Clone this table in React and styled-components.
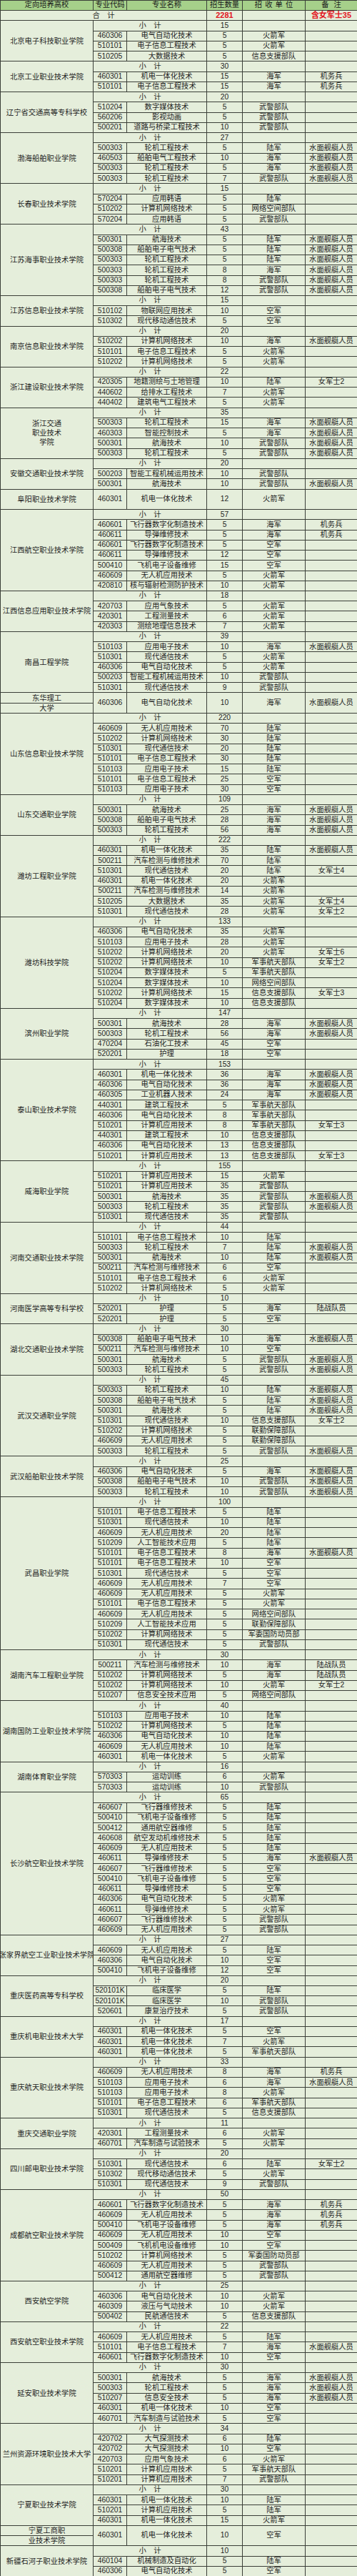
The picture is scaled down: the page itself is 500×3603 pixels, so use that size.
import React from 'react';
import styled, { createGlobalStyle } from 'styled-components';

const W = '水面舰艇人员';
const J = '机务兵';
const L = '陆战队员';

const groups = [
  { school: '北京电子科技职业学院', total: 15, rows: [
    ['460306', '电气自动化技术', 5, '火箭军', ''],
    ['510101', '电子信息工程技术', 5, '火箭军', ''],
    ['510205', '大数据技术', 5, '信息支援部队', ''],
  ]},
  { school: '北京工业职业技术学院', total: 30, rows: [
    ['460301', '机电一体化技术', 15, '海军', J],
    ['510101', '电子信息工程技术', 15, '海军', J],
  ]},
  { school: '辽宁省交通高等专科学校', total: 20, rows: [
    ['510204', '数字媒体技术', 5, '武警部队', ''],
    ['560206', '影视动画', 5, '武警部队', ''],
    ['500201', '道路与桥梁工程技术', 10, '武警部队', ''],
  ]},
  { school: '渤海船舶职业学院', total: 27, rows: [
    ['500303', '轮机工程技术', 5, '陆军', W],
    ['460503', '船舶电气工程技术', 10, '海军', W],
    ['500303', '轮机工程技术', 5, '海军', W],
    ['500303', '轮机工程技术', 7, '武警部队', W],
  ]},
  { school: '长春职业技术学院', total: 15, rows: [
    ['570204', '应用韩语', 5, '陆军', ''],
    ['510202', '计算机网络技术', 5, '网络空间部队', ''],
    ['570204', '应用韩语', 5, '武警部队', ''],
  ]},
  { school: '江苏海事职业技术学院', total: 43, rows: [
    ['500301', '航海技术', 5, '陆军', W],
    ['500308', '船舶电子电气技术', 5, '陆军', W],
    ['500303', '轮机工程技术', 5, '陆军', W],
    ['500303', '轮机工程技术', 8, '海军', W],
    ['500303', '轮机工程技术', 8, '武警部队', W],
    ['500308', '船舶电子电气技术', 12, '武警部队', W],
  ]},
  { school: '江苏信息职业技术学院', total: 15, rows: [
    ['510102', '物联网应用技术', 10, '空军', ''],
    ['510302', '现代移动通信技术', 5, '空军', ''],
  ]},
  { school: '南京信息职业技术学院', total: 20, rows: [
    ['510202', '计算机网络技术', 10, '海军', W],
    ['510101', '电子信息工程技术', 5, '火箭军', ''],
    ['510202', '计算机网络技术', 5, '火箭军', ''],
  ]},
  { school: '浙江建设职业技术学院', total: 22, rows: [
    ['420305', '地籍测绘与土地管理', 10, '陆军', '女军士2'],
    ['440602', '给排水工程技术', 7, '火箭军', ''],
    ['440402', '建筑电气工程技术', 5, '火箭军', ''],
  ]},
  { school: ['浙江交通', '职业技术', '学院'], total: 35, rows: [
    ['500303', '轮机工程技术', 15, '海军', W],
    ['460303', '智能控制技术', 5, '海军', W],
    ['500301', '航海技术', 10, '武警部队', W],
    ['500303', '轮机工程技术', 5, '武警部队', W],
  ]},
  { school: '安徽交通职业技术学院', total: 20, rows: [
    ['500203', '智能工程机械运用技术', 10, '武警部队', ''],
    ['500301', '航海技术', 10, '武警部队', W],
  ]},
  { school: '阜阳职业技术学院', tall: true, rows: [
    ['460301', '机电一体化技术', 12, '火箭军', ''],
  ]},
  { school: '江西航空职业技术学院', total: 57, rows: [
    ['460601', '飞行器数字化制造技术', 5, '海军', J],
    ['460611', '导弹维修技术', 5, '海军', J],
    ['460601', '飞行器数字化制造技术', 5, '空军', ''],
    ['460611', '导弹维修技术', 12, '空军', ''],
    ['500410', '飞机电子设备维修', 15, '空军', ''],
    ['460609', '无人机应用技术', 5, '火箭军', ''],
    ['420810', '核与辐射检测防护技术', 10, '火箭军', ''],
  ]},
  { school: '江西信息应用职业技术学院', total: 18, rows: [
    ['420703', '应用气象技术', 5, '火箭军', ''],
    ['420301', '工程测量技术', 6, '火箭军', ''],
    ['420303', '测绘地理信息技术', 7, '火箭军', ''],
  ]},
  { school: '南昌工程学院', total: 39, rows: [
    ['510103', '应用电子技术', 10, '海军', W],
    ['510301', '现代通信技术', 5, '火箭军', ''],
    ['460306', '电气自动化技术', 5, '火箭军', ''],
    ['500203', '智能工程机械运用技术', 10, '武警部队', ''],
    ['510301', '现代通信技术', 9, '武警部队', ''],
  ]},
  { split: ['东华理工', '大学'], rows: [
    ['460306', '电气自动化技术', 10, '海军', W],
  ]},
  { school: '山东信息职业技术学院', total: 220, rows: [
    ['460609', '无人机应用技术', 70, '陆军', ''],
    ['510202', '计算机网络技术', 30, '陆军', ''],
    ['510301', '现代通信技术', 20, '陆军', ''],
    ['510101', '电子信息工程技术', 30, '陆军', ''],
    ['510103', '应用电子技术', 15, '陆军', ''],
    ['510101', '电子信息工程技术', 25, '空军', ''],
    ['510103', '应用电子技术', 30, '空军', ''],
  ]},
  { school: '山东交通职业学院', total: 109, rows: [
    ['500301', '航海技术', 25, '海军', W],
    ['500308', '船舶电子电气技术', 28, '海军', W],
    ['500303', '轮机工程技术', 56, '海军', W],
  ]},
  { school: '潍坊工程职业学院', total: 222, rows: [
    ['460301', '机电一体化技术', 35, '陆军', W],
    ['500211', '汽车检测与维修技术', 70, '陆军', ''],
    ['510301', '现代通信技术', 20, '陆军', '女军士4'],
    ['460301', '机电一体化技术', 20, '火箭军', ''],
    ['500211', '汽车检测与维修技术', 14, '火箭军', ''],
    ['510205', '大数据技术', 35, '火箭军', '女军士4'],
    ['510301', '现代通信技术', 28, '火箭军', '女军士2'],
  ]},
  { school: '潍坊科技学院', total: 133, rows: [
    ['460306', '电气自动化技术', 35, '火箭军', ''],
    ['510103', '应用电子技术', 28, '火箭军', ''],
    ['510202', '计算机网络技术', 20, '火箭军', '女军士6'],
    ['510202', '计算机网络技术', 10, '军事航天部队', '女军士2'],
    ['510204', '数字媒体技术', 5, '军事航天部队', ''],
    ['510204', '数字媒体技术', 10, '网络空间部队', ''],
    ['510202', '计算机网络技术', 15, '信息支援部队', '女军士3'],
    ['510204', '数字媒体技术', 10, '信息支援部队', ''],
  ]},
  { school: '滨州职业学院', total: 147, rows: [
    ['500301', '航海技术', 28, '海军', W],
    ['500303', '轮机工程技术', 56, '海军', W],
    ['470204', '石油化工技术', 45, '空军', ''],
    ['520201', '护理', 18, '空军', ''],
  ]},
  { school: '泰山职业技术学院', total: 153, rows: [
    ['460301', '机电一体化技术', 36, '海军', W],
    ['460306', '电气自动化技术', 36, '海军', W],
    ['460305', '工业机器人技术', 24, '海军', W],
    ['440301', '建筑工程技术', 5, '军事航天部队', ''],
    ['460306', '电气自动化技术', 8, '军事航天部队', ''],
    ['510201', '计算机应用技术', 8, '军事航天部队', '女军士3'],
    ['440301', '建筑工程技术', 10, '信息支援部队', ''],
    ['460306', '电气自动化技术', 13, '信息支援部队', ''],
    ['510201', '计算机应用技术', 13, '信息支援部队', '女军士3'],
  ]},
  { school: '威海职业学院', total: 155, rows: [
    ['510201', '计算机应用技术', 15, '火箭军', ''],
    ['510201', '计算机应用技术', 35, '武警部队', ''],
    ['500301', '航海技术', 35, '武警部队', W],
    ['500303', '轮机工程技术', 35, '武警部队', W],
    ['510301', '现代通信技术', 35, '武警部队', ''],
  ]},
  { school: '河南交通职业技术学院', total: 44, rows: [
    ['510101', '电子信息工程技术', 10, '陆军', ''],
    ['500303', '轮机工程技术', 7, '陆军', W],
    ['500301', '航海技术', 10, '陆军', W],
    ['500211', '汽车检测与维修技术', 6, '空军', ''],
    ['510101', '电子信息工程技术', 6, '火箭军', ''],
    ['510202', '计算机网络技术', 5, '火箭军', ''],
  ]},
  { school: '河南医学高等专科学校', total: 10, rows: [
    ['520201', '护理', 5, '海军', L],
    ['520201', '护理', 5, '空军', ''],
  ]},
  { school: '湖北交通职业技术学院', total: 30, rows: [
    ['500308', '船舶电子电气技术', 10, '海军', W],
    ['500211', '汽车检测与维修技术', 10, '空军', ''],
    ['500301', '航海技术', 5, '武警部队', W],
    ['500303', '轮机工程技术', 5, '武警部队', W],
  ]},
  { school: '武汉交通职业学院', total: 45, rows: [
    ['500303', '轮机工程技术', 10, '陆军', W],
    ['500308', '船舶电子电气技术', 5, '陆军', W],
    ['500301', '航海技术', 5, '陆军', W],
    ['510301', '现代通信技术', 10, '信息支援部队', '女军士2'],
    ['510202', '计算机网络技术', 5, '联勤保障部队', ''],
    ['460609', '无人机应用技术', 5, '联勤保障部队', ''],
    ['500303', '轮机工程技术', 5, '武警部队', W],
  ]},
  { school: '武汉船舶职业技术学院', total: 25, rows: [
    ['460306', '电气自动化技术', 5, '海军', W],
    ['500308', '船舶电子电气技术', 10, '武警部队', W],
    ['500303', '轮机工程技术', 10, '武警部队', W],
  ]},
  { school: '武昌职业学院', total: 100, rows: [
    ['510101', '电子信息工程技术', 5, '陆军', ''],
    ['510301', '现代通信技术', 10, '陆军', ''],
    ['460609', '无人机应用技术', 20, '陆军', ''],
    ['510209', '人工智能技术应用', 5, '陆军', ''],
    ['510101', '电子信息工程技术', 8, '海军', W],
    ['510101', '电子信息工程技术', 10, '空军', ''],
    ['510301', '现代通信技术', 5, '空军', ''],
    ['460609', '无人机应用技术', 7, '空军', ''],
    ['460609', '无人机应用技术', 5, '火箭军', ''],
    ['510101', '电子信息工程技术', 5, '火箭军', ''],
    ['460609', '无人机应用技术', 5, '网络空间部队', ''],
    ['510209', '人工智能技术应用', 5, '联勤保障部队', ''],
    ['510202', '计算机网络技术', 5, '军委国防动员部', ''],
    ['510301', '现代通信技术', 5, '武警部队', ''],
  ]},
  { school: '湖南汽车工程职业学院', total: 30, rows: [
    ['500211', '汽车检测与维修技术', 10, '海军', L],
    ['510202', '计算机网络技术', 5, '海军', L],
    ['510202', '计算机网络技术', 10, '火箭军', '女军士2'],
    ['510207', '信息安全技术应用', 5, '网络空间部队', ''],
  ]},
  { school: '湖南国防工业职业技术学院', total: 40, rows: [
    ['510103', '应用电子技术', 10, '陆军', ''],
    ['510202', '计算机网络技术', 5, '陆军', ''],
    ['460306', '电气自动化技术', 10, '陆军', ''],
    ['460609', '无人机应用技术', 10, '陆军', ''],
    ['460301', '机电一体化技术', 5, '火箭军', ''],
  ]},
  { school: '湖南体育职业学院', total: 16, rows: [
    ['570303', '运动训练', 6, '火箭军', ''],
    ['570303', '运动训练', 10, '武警部队', ''],
  ]},
  { school: '长沙航空职业技术学院', total: 65, rows: [
    ['460607', '飞行器维修技术', 5, '陆军', ''],
    ['500410', '飞机电子设备维修', 5, '陆军', ''],
    ['500412', '通用航空器维修', 5, '陆军', ''],
    ['460608', '航空发动机维修技术', 5, '陆军', ''],
    ['460609', '无人机应用技术', 5, '陆军', ''],
    ['460611', '导弹维修技术', 5, '海军', W],
    ['460607', '飞行器维修技术', 5, '空军', ''],
    ['500410', '飞机电子设备维修', 5, '空军', ''],
    ['460611', '导弹维修技术', 5, '空军', ''],
    ['460306', '电气自动化技术', 5, '火箭军', ''],
    ['460611', '导弹维修技术', 5, '火箭军', ''],
    ['460607', '飞行器维修技术', 5, '武警部队', ''],
    ['460609', '无人机应用技术', 5, '武警部队', ''],
  ]},
  { school: '张家界航空工业职业技术学院', total: 27, rows: [
    ['460609', '无人机应用技术', 5, '陆军', ''],
    ['460306', '电气自动化技术', 10, '空军', ''],
    ['500410', '飞机电子设备维修', 12, '空军', ''],
  ]},
  { school: '重庆医药高等专科学校', total: 20, rows: [
    ['520101K', '临床医学', 5, '陆军', ''],
    ['520101K', '临床医学', 10, '武警部队', ''],
    ['520601', '康复治疗技术', 5, '武警部队', ''],
  ]},
  { school: '重庆机电职业技术大学', total: 17, rows: [
    ['460301', '机电一体化技术', 5, '空军', ''],
    ['460301', '机电一体化技术', 7, '火箭军', ''],
    ['460301', '机电一体化技术', 5, '军事航天部队', ''],
  ]},
  { school: '重庆航天职业技术学院', total: 33, rows: [
    ['460609', '无人机应用技术', 8, '海军', J],
    ['510103', '应用电子技术', 6, '海军', W],
    ['510103', '应用电子技术', 8, '火箭军', ''],
    ['510101', '电子信息工程技术', 6, '军事航天部队', ''],
    ['510301', '现代通信技术', 5, '信息支援部队', ''],
  ]},
  { school: '重庆交通职业学院', total: 11, rows: [
    ['420301', '工程测量技术', 6, '火箭军', ''],
    ['460701', '汽车制造与试验技术', 5, '火箭军', ''],
  ]},
  { school: '四川邮电职业技术学院', total: 20, rows: [
    ['510301', '现代通信技术', 6, '陆军', '女军士2'],
    ['510302', '现代移动通信技术', 5, '火箭军', ''],
    ['510301', '现代通信技术', 9, '武警部队', ''],
  ]},
  { school: '成都航空职业技术学院', total: 50, rows: [
    ['460601', '飞行器数字化制造技术', 5, '海军', J],
    ['460609', '无人机应用技术', 5, '海军', J],
    ['500410', '飞机电子设备维修', 5, '海军', J],
    ['460609', '无人机应用技术', 10, '空军', ''],
    ['500409', '飞机机电设备维修', 10, '空军', ''],
    ['510202', '计算机网络技术', 5, '军委国防动员部', ''],
    ['460609', '无人机应用技术', 5, '武警部队', ''],
    ['500412', '通用航空器维修', 5, '武警部队', ''],
  ]},
  { school: '西安航空学院', total: 25, rows: [
    ['460306', '电气自动化技术', 10, '火箭军', ''],
    ['460309', '液压与气动技术', 10, '火箭军', ''],
    ['500402', '民航通信技术', 5, '信息支援部队', ''],
  ]},
  { school: '西安航空职业技术学院', total: 22, rows: [
    ['460609', '无人机应用技术', 5, '陆军', ''],
    ['510101', '电子信息工程技术', 7, '海军', W],
    ['460601', '飞行器数字化制造技术', 10, '空军', ''],
  ]},
  { school: '延安职业技术学院', total: 30, rows: [
    ['500301', '航海技术', 5, '海军', W],
    ['500303', '轮机工程技术', 5, '海军', W],
    ['510207', '信息安全技术', 5, '海军', W],
    ['460301', '机电一体化技术', 10, '空军', ''],
    ['460701', '汽车制造与试验技术', 5, '空军', ''],
  ]},
  { school: '兰州资源环境职业技术大学', total: 34, rows: [
    ['420702', '大气探测技术', 6, '陆军', ''],
    ['420702', '大气探测技术', 10, '空军', ''],
    ['420703', '应用气象技术', 6, '火箭军', ''],
    ['510201', '计算机应用技术', 5, '军事航天部队', ''],
    ['510201', '计算机应用技术', 7, '武警部队', ''],
  ]},
  { school: '宁夏职业技术学院', total: 30, rows: [
    ['460301', '机电一体化技术', 10, '陆军', ''],
    ['510201', '计算机应用技术', 5, '陆军', ''],
    ['460301', '机电一体化技术', 15, '火箭军', ''],
  ]},
  { split: ['宁夏工商职', '业技术学院'], rows: [
    ['460301', '机电一体化技术', 10, '空军', ''],
  ]},
  { school: '新疆石河子职业技术学院', total: 10, rows: [
    ['460104', '机械制造及自动化', 5, '陆军', ''],
    ['460306', '电气自动化技术', 5, '空军', ''],
  ]},
];

const groupRows = (g) => {
  if (g.split || g.tall) return 2;
  return g.rows.length + (g.total != null ? 1 : 0);
};

const TOTAL_ROWS = 2 + groups.reduce((s, g) => s + groupRows(g), 0);

const GlobalStyle = createGlobalStyle`
  html, body { margin: 0; padding: 0; background: #e5eedb; }
  #root { width: 500px; }
`;

const Table = styled.div`
  display: grid;
  grid-template-columns: 129px 46px 111px 49px 87px 72px;
  grid-template-rows: repeat(${(p) => p.$rows}, minmax(0, 1fr));
  gap: 1px;
  padding: 1px 0 0 1px;
  width: 500px;
  height: 3603px;
  box-sizing: border-box;
  background: #3b3f38;
  font-family: "Liberation Sans", "Noto Sans CJK SC", sans-serif;
  font-size: 10.3px;
  color: #1f1f1f;
`;

const Cell = styled.div`
  grid-row: span ${(p) => p.$rows || 1};
  grid-column: span ${(p) => p.$cols || 1};
  display: flex;
  align-items: center;
  justify-content: center;
  overflow: hidden;
  white-space: nowrap;
  line-height: 1;
  background: #e5eedb;
  min-height: 0;
`;

const HeadCell = styled(Cell)`
  background: #a6d08a;
  color: #1a1a1a;
  word-spacing: ${(p) => p.$ws || 0}px;
`;

const SchoolCell = styled(Cell)`
  flex-direction: column;
  line-height: 13px;
`;

const Label = styled(Cell)`
  word-spacing: 0;
`;

const Red = styled(Cell)`
  color: #e2161f;
  font-weight: bold;
  font-size: 11px;
`;

function Group({ g }) {
  const n = groupRows(g);
  const out = [];
  if (g.split) {
    const r = g.rows[0];
    return (
      <>
        <SchoolCell>{g.split[0]}</SchoolCell>
        <Cell $rows={2}>{r[0]}</Cell>
        <Cell $rows={2}>{r[1]}</Cell>
        <Cell $rows={2}>{r[2]}</Cell>
        <Cell $rows={2}>{r[3]}</Cell>
        <Cell $rows={2}>{r[4]}</Cell>
        <SchoolCell>{g.split[1]}</SchoolCell>
      </>
    );
  }
  const name = Array.isArray(g.school)
    ? g.school.map((s) => <span key={s}>{s}</span>)
    : g.school;
  out.push(<SchoolCell key="s" $rows={n}>{name}</SchoolCell>);
  if (g.tall) {
    const r = g.rows[0];
    r.forEach((v, i) => out.push(<Cell key={'t' + i} $rows={2}>{v}</Cell>));
    return <>{out}</>;
  }
  if (g.total != null) {
    out.push(<Label key="sl" $cols={2}>小　计</Label>);
    out.push(<Cell key="st">{g.total}</Cell>);
    out.push(<Cell key="su" />);
    out.push(<Cell key="sn" />);
  }
  g.rows.forEach((r, i) => {
    r.forEach((v, j) => out.push(<Cell key={i + '-' + j}>{v}</Cell>));
  });
  return <>{out}</>;
}

export default function App() {
  return (
    <>
      <GlobalStyle />
      <Table $rows={TOTAL_ROWS}>
        <HeadCell>定向培养高校</HeadCell>
        <HeadCell>专业代码</HeadCell>
        <HeadCell>专业名称</HeadCell>
        <HeadCell>招生数量</HeadCell>
        <HeadCell $ws={1.2}>招 收 单 位</HeadCell>
        <HeadCell $ws={4}>备 注</HeadCell>
        <Label $cols={3}>合　计</Label>
        <Red>2281</Red>
        <Cell />
        <Red>含女军士35</Red>
        {groups.map((g, i) => (
          <Group key={i} g={g} />
        ))}
      </Table>
    </>
  );
}
